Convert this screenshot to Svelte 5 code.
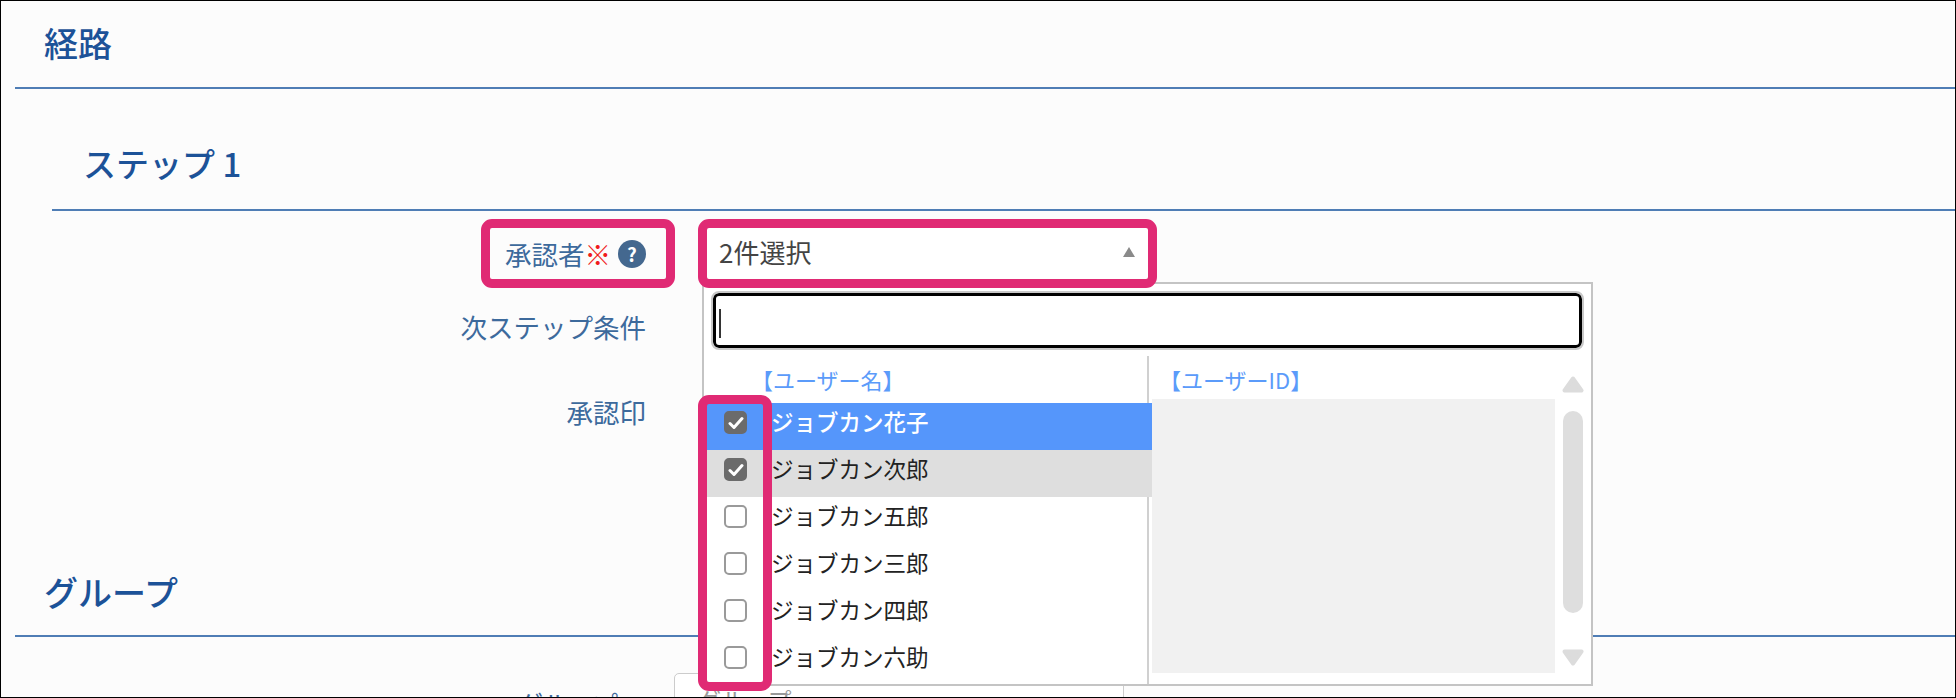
<script lang="ts">
  const users = [
    { name: 'ジョブカン花子', checked: true, state: 'active' },
    { name: 'ジョブカン次郎', checked: true, state: 'selected' },
    { name: 'ジョブカン五郎', checked: false, state: '' },
    { name: 'ジョブカン三郎', checked: false, state: '' },
    { name: 'ジョブカン四郎', checked: false, state: '' },
    { name: 'ジョブカン六助', checked: false, state: '' }
  ]
</script>

<div class="page">
  <h2 class="head">経路</h2>
  <h3 class="step-head">ステップ 1</h3>

  <div class="form-row first">
    <div class="label">
      <span>承認者</span><span class="req">※</span><span class="help">?</span>
    </div>
    <div class="select">
      <span class="select-value">2件選択</span>
      <svg class="caret-up" width="12" height="10" viewBox="0 0 12 10"><path d="M6 0 12 10H0Z" /></svg>

      <div class="dropdown">
        <div class="search"><span class="cursor"></span></div>
        <div class="columns">
          <div class="col-left">
            <div class="col-title left-title">【ユーザー名】</div>
            {#each users as user}
              <div class="user {user.state}">
                <span class="box" class:checked={user.checked}>
                  {#if user.checked}
                    <svg width="16" height="14" viewBox="0 0 16 14"><path d="M2 7.5 6 11.5 14 2.5" /></svg>
                  {/if}
                </span>
                <span class="user-name">{user.name}</span>
              </div>
            {/each}
          </div>
          <div class="col-right">
            <div class="col-title right-title">【ユーザーID】</div>
            <div class="id-panel"></div>
          </div>
          <div class="scroll">
            <svg width="22" height="17" viewBox="0 0 22 17"><path d="M11 2.5 19.5 14.5H2.5Z" /></svg>
            <div class="thumb"></div>
            <svg width="22" height="17" viewBox="0 0 22 17"><path d="M11 14.5 19.5 2.5H2.5Z" /></svg>
          </div>
        </div>
      </div>
    </div>
  </div>
  <div class="form-row second">
    <div class="label">次ステップ条件</div>
  </div>
  <div class="form-row third">
    <div class="label">承認印</div>
  </div>

  <h2 class="head group-head">グループ</h2>
  <div class="form-row group-row">
    <div class="label">グループ</div>
    <div class="group-input">グループ</div>
  </div>

  <div class="mark mark-label"></div>
  <div class="mark mark-select"></div>
  <div class="mark mark-checks"></div>
</div>

<style>
  :global(body) {
    margin: 0;
    background: #fcfcfc;
  }

  .page {
    position: relative;
    box-sizing: border-box;
    width: 1956px;
    height: 698px;
    overflow: hidden;
    border: 1px solid #000;
    background: #fcfcfc;
    font-family: "Noto Sans CJK JP", "Noto Sans", sans-serif;
  }

  .head {
    box-sizing: border-box;
    height: 88px;
    margin: 0 0 0 14px;
    padding-left: 29px;
    border-bottom: 2px solid #4f7db5;
    color: #1c5298;
    font-size: 34px;
    font-weight: 500;
    line-height: 84px;
  }

  .step-head {
    box-sizing: border-box;
    height: 122px;
    margin: 0 0 0 51px;
    padding: 49px 0 0 31px;
    border-bottom: 2px solid #4f7db5;
    color: #1c5298;
    font-size: 33px;
    font-weight: 500;
    line-height: 50px;
  }

  .form-row {
    display: flex;
    height: 51px;
  }

  .form-row.first {
    margin-top: 17px;
  }

  .form-row.second {
    margin-top: 22px;
  }

  .form-row.third {
    margin-top: 34px;
  }

  .label {
    display: flex;
    justify-content: flex-end;
    align-items: center;
    box-sizing: border-box;
    width: 645px;
    color: #3d6a9c;
    font-size: 26.5px;
    white-space: nowrap;
  }

  .req {
    color: #f01c1c;
  }

  .help {
    display: flex;
    justify-content: center;
    align-items: center;
    width: 28px;
    height: 28px;
    margin-left: 7px;
    border-radius: 50%;
    background: #44688f;
    color: #fff;
    font-size: 19px;
    font-weight: 700;
    line-height: 1;
  }

  .select {
    position: relative;
    display: flex;
    justify-content: space-between;
    align-items: center;
    box-sizing: border-box;
    width: 441px;
    margin-left: 61px;
    padding: 0 13px 0 12px;
    background: #fff;
    color: #444;
    font-size: 26px;
  }

  .select-value {
    margin-top: -4px;
  }

  .caret-up {
    margin: -4px 0 0;
  }

  .caret-up path {
    fill: #8a8a8a;
  }

  .dropdown {
    position: absolute;
    top: 54px;
    left: -5px;
    z-index: 2;
    box-sizing: border-box;
    width: 891px;
    height: 404px;
    padding: 9px 9px 0;
    border: 2px solid #c4c4c4;
    background: #fff;
  }

  .search {
    box-sizing: border-box;
    height: 55px;
    padding: 13px 3px;
    border: 3px solid #000;
    border-radius: 6px;
    outline: 2px solid #c8c8c8;
    outline-offset: 0;
    background: #fff;
  }

  .cursor {
    display: block;
    width: 2px;
    height: 29px;
    background: #333;
  }

  .columns {
    display: flex;
    height: 328px;
    margin: 8px -9px 0;
  }

  .col-left {
    box-sizing: border-box;
    width: 445px;
    border-right: 2px solid #d0d0d0;
  }

  .col-title {
    color: #5b9bfa;
    font-size: 22px;
    white-space: nowrap;
  }

  .left-title {
    height: 47px;
    padding-left: 47px;
    line-height: 47px;
  }

  .right-title {
    height: 43px;
    padding-left: 7px;
    line-height: 47px;
  }

  .user {
    display: flex;
    align-items: center;
    width: 448px;
    height: 47px;
    color: #222;
    font-size: 22.5px;
    line-height: 1;
  }

  .user.active {
    background: #5596fb;
    color: #fff;
    font-weight: 500;
  }

  .user.selected {
    background: #dedede;
  }

  .box {
    display: flex;
    justify-content: center;
    align-items: center;
    box-sizing: border-box;
    width: 23px;
    height: 23px;
    margin: -8px 0 0 20px;
    border: 2px solid #9a9a9a;
    border-radius: 5px;
    background: #fff;
  }

  .box.checked {
    border-color: #6b6b6b;
    background: #6b6b6b;
  }

  .box path {
    fill: none;
    stroke: #fff;
    stroke-width: 3;
    stroke-linecap: round;
    stroke-linejoin: round;
  }

  .user-name {
    margin: -11px 0 0 24px;
    white-space: nowrap;
  }

  .col-right {
    box-sizing: border-box;
    width: 403px;
    margin-left: 3px;
  }

  .id-panel {
    height: 274px;
    background: #f1f1f1;
  }

  .scroll {
    display: flex;
    flex-direction: column;
    align-items: center;
    width: 22px;
    margin-left: 7px;
    padding-top: 20px;
  }

  .scroll path {
    fill: #dcdcdc;
    stroke: #dcdcdc;
    stroke-width: 4;
    stroke-linejoin: round;
  }

  .thumb {
    width: 20px;
    height: 202px;
    margin: 18px 0 36px;
    border-radius: 10px;
    background: #dedede;
  }

  .group-head {
    margin-top: 113px;
    height: 87px;
    line-height: 84px;
  }

  .group-row {
    margin-top: 36px;
  }

  .group-row .label {
    padding: 8px 28px 0 0;
    font-size: 25.5px;
  }

  .group-input {
    box-sizing: border-box;
    width: 450px;
    height: 51px;
    margin-left: 28px;
    padding: 6px 0 0 22px;
    border: 1px solid #ccc;
    border-radius: 5px;
    background: #fff;
    color: #999;
    font-size: 24px;
    line-height: 40px;
  }

  .mark {
    position: absolute;
    z-index: 3;
    box-sizing: border-box;
    border: 9px solid #e02a74;
    border-radius: 11px;
  }

  .mark-label {
    top: 218px;
    left: 480px;
    width: 194px;
    height: 69px;
  }

  .mark-select {
    top: 218px;
    left: 697px;
    width: 459px;
    height: 69px;
  }

  .mark-checks {
    top: 394px;
    left: 697px;
    width: 74px;
    height: 296px;
  }
</style>
